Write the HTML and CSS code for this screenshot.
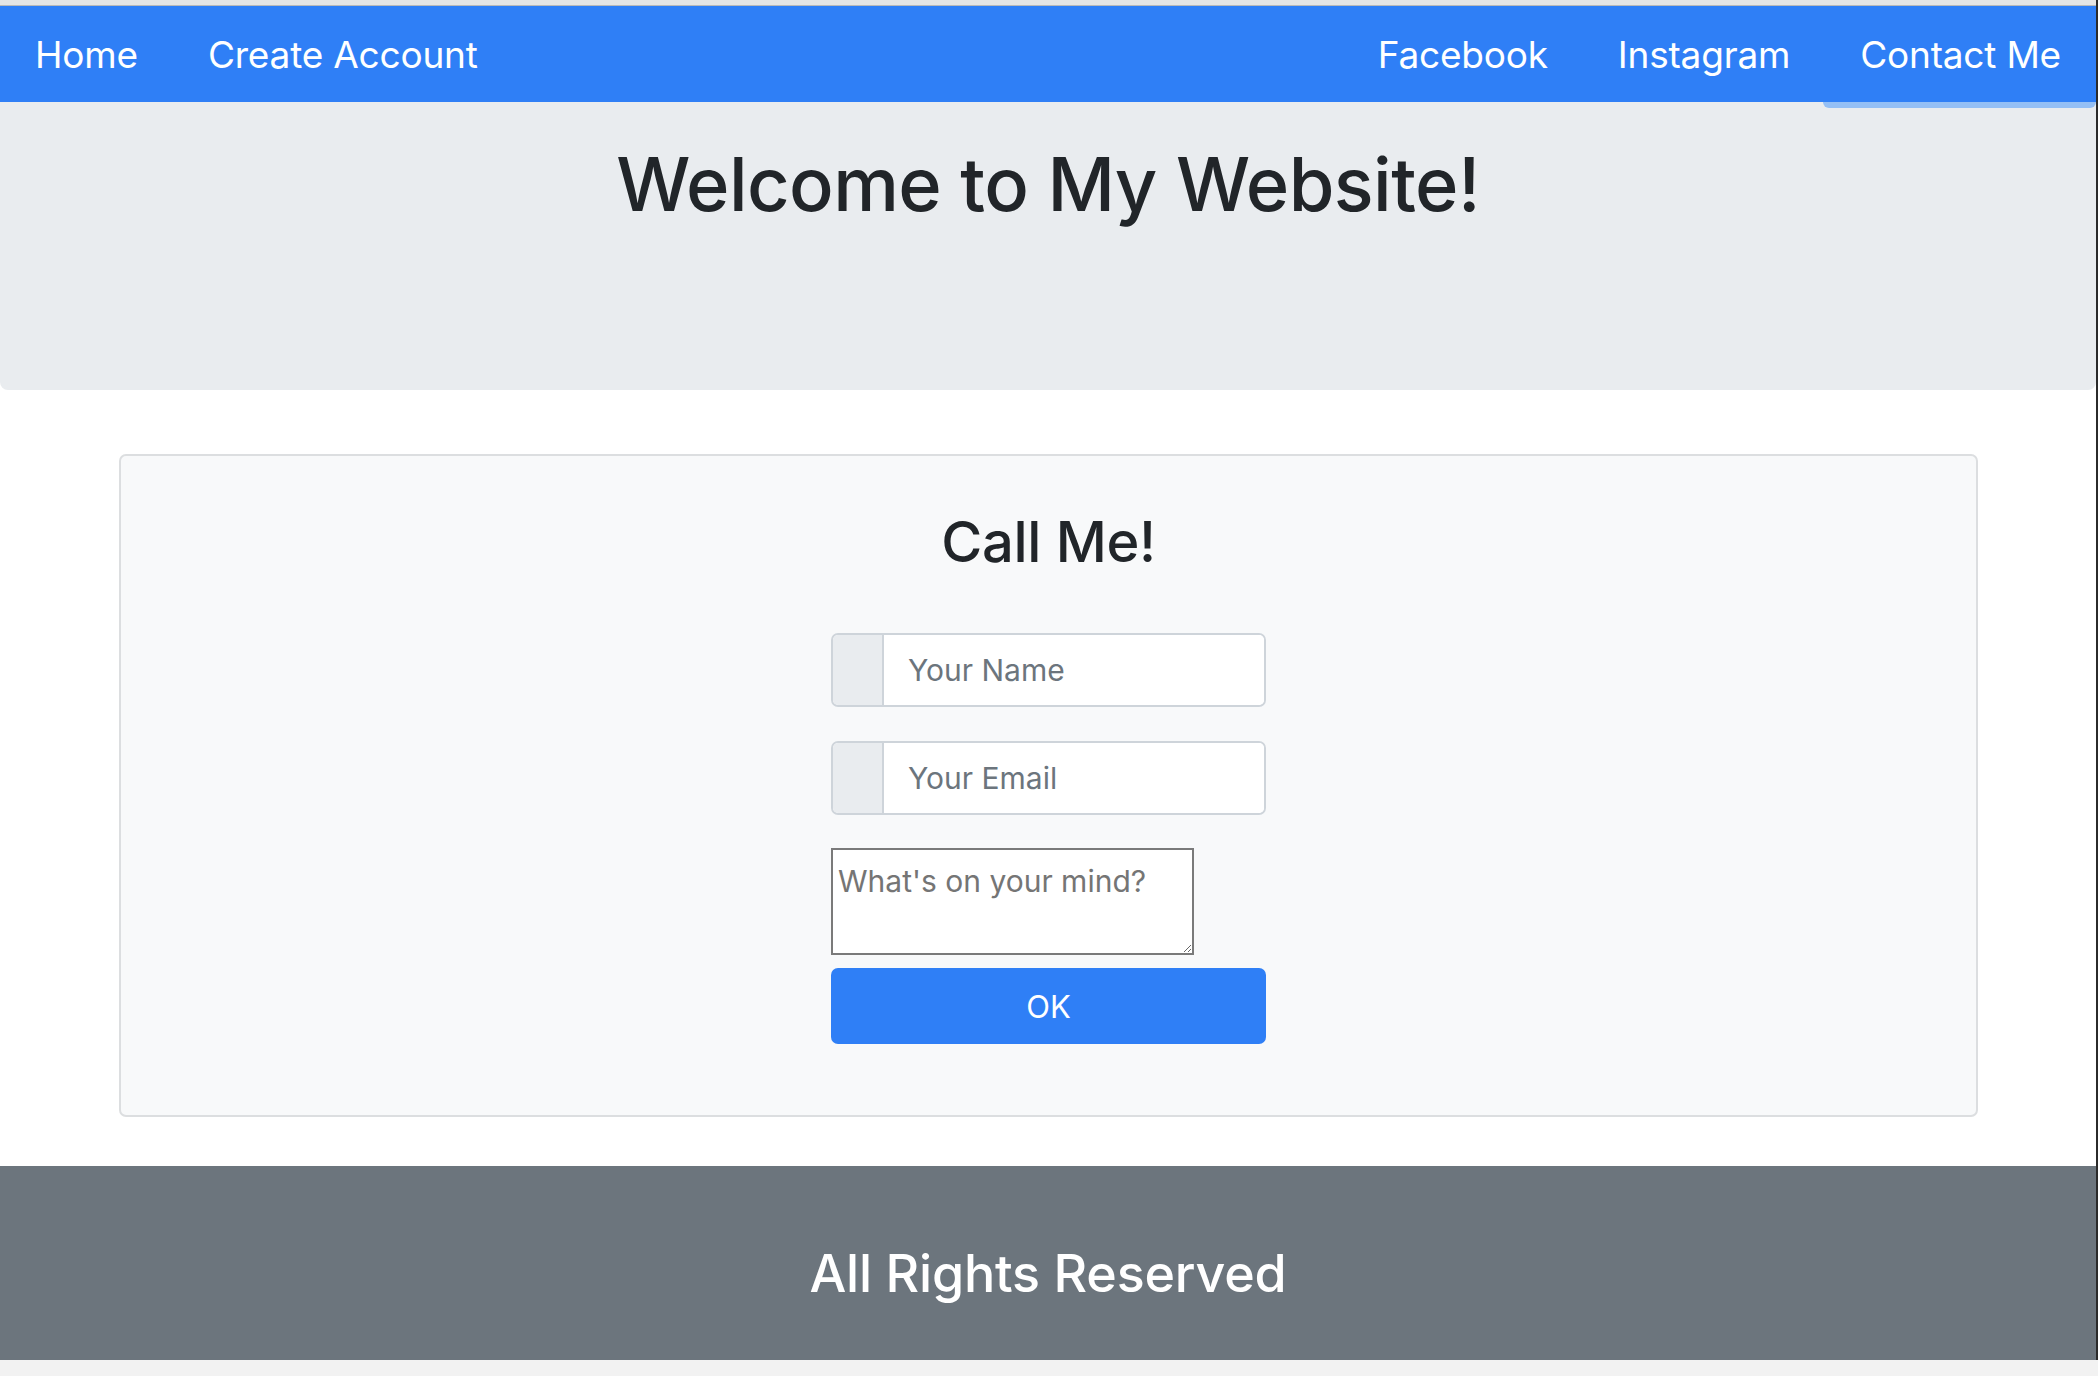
FILE: index.html
```html
<!DOCTYPE html>
<html lang="en">
<head>
<meta charset="utf-8">
<title>My Website</title>
<link rel="stylesheet" href="styles.css">
</head>
<body>
<div class="window">
  <div class="topstrip"></div>
  <nav class="navbar">
    <div class="nav-left">
      <a class="nav-link" href="#">Home</a>
      <a class="nav-link" href="#">Create Account</a>
    </div>
    <div class="nav-right">
      <a class="nav-link" href="#">Facebook</a>
      <a class="nav-link" href="#">Instagram</a>
      <a class="nav-link active" href="#">Contact Me</a>
    </div>
  </nav>
  <header class="hero">
    <h1 class="hero-title">Welcome to My Website!</h1>
  </header>
  <main class="main">
    <section class="card">
      <h2 class="card-title">Call Me!</h2>
      <form class="form">
        <div class="input-group">
          <span class="prepend"></span>
          <input class="field" type="text" placeholder="Your Name">
        </div>
        <div class="input-group">
          <span class="prepend"></span>
          <input class="field" type="email" placeholder="Your Email">
        </div>
        <textarea class="message" placeholder="What's on your mind?"></textarea>
        <button class="btn" type="button">OK</button>
      </form>
    </section>
  </main>
  <footer class="footer">
    <h3 class="footer-text">All Rights Reserved</h3>
  </footer>
</div>
<div class="bottomstrip"></div>
</body>
</html>
```

FILE: styles.css
```css
* { box-sizing: border-box; }
html, body { margin: 0; padding: 0; }
body {
  background: #f2f2f2;
  font-family: "Inter", "Liberation Sans", sans-serif;
  color: #212529;
  width: 2098px;
  overflow: hidden;
}
.window {
  width: 2098px;
  background: #fff;
  border-right: 2px solid #2b2b2b;
}
.topstrip {
  height: 6px;
  background: #e5e5e5;
  border-bottom: 1px solid #b9b9b9;
}
.navbar {
  height: 96px;
  background: #2f7ff6;
  display: flex;
  align-items: stretch;
  justify-content: space-between;
}
.nav-left, .nav-right { display: flex; align-items: stretch; }
.nav-link {
  display: flex;
  align-items: center;
  padding: 0 35px;
  color: #fff;
  text-decoration: none;
  font-size: 37px;
  letter-spacing: -0.2px;
}
.nav-link.active {
  position: relative;
  border-radius: 6px 6px 0 0;
}
.nav-link.active::after {
  content: "";
  position: absolute;
  left: -2px;
  right: 0;
  bottom: -6px;
  height: 6px;
  background: #94bff5;
  border-radius: 0 0 6px 6px;
}
.hero {
  height: 288px;
  background: #e9ecef;
  border-radius: 0 0 8px 8px;
  text-align: center;
  padding-top: 45px;
}
.hero-title {
  margin: 0;
  font-size: 74px;
  font-weight: 500;
  line-height: 1;
  letter-spacing: -0.6px;
}
.main {
  padding: 64px 118px 49px 119px;
}
.card {
  height: 663px;
  background: #f8f9fa;
  border: 2px solid #dcdee0;
  border-radius: 7px;
  padding-top: 58px;
  text-align: center;
}
.card-title {
  margin: 0 0 63px;
  font-size: 56px;
  font-weight: 500;
  line-height: 1;
  letter-spacing: -0.3px;
}
.form {
  width: 435px;
  margin: 0 auto;
  display: flex;
  flex-direction: column;
  align-items: flex-start;
  text-align: left;
}
.input-group {
  width: 435px;
  height: 74px;
  display: flex;
  border: 2px solid #ced4da;
  border-radius: 7px;
  background: #fff;
  overflow: hidden;
  margin-bottom: 34px;
}
.input-group + .input-group { margin-bottom: 33px; }
.prepend {
  flex: 0 0 51px;
  width: 51px;
  background: #e9ecef;
  border-right: 2px solid #ced4da;
}
.field {
  flex: 1 1 auto;
  min-width: 0;
  width: 100%;
  border: 0;
  outline: 0;
  background: #fff;
  padding: 0 0 0 24px;
  font-family: inherit;
  font-size: 30px;
  color: #495057;
}
.field::placeholder { color: #6c757d; }
.message {
  width: 363px;
  height: 107px;
  border: 2px solid #7a7a7a;
  border-radius: 0;
  padding: 13px 5px 2px;
  margin: 0;
  font-family: inherit;
  font-size: 30px;
  background: #fff;
  display: block;
}
.message::placeholder { color: #757575; }
.btn {
  width: 435px;
  height: 76px;
  margin-top: 13px;
  background: #2f7ff6;
  color: #fff;
  border: 0;
  border-radius: 7px;
  font-family: inherit;
  font-size: 31px;
}
.footer {
  height: 194px;
  background: #6c757d;
  text-align: center;
  padding-top: 82px;
}
.footer-text {
  margin: 0;
  color: #fff;
  font-size: 52px;
  font-weight: 500;
  line-height: 1;
  letter-spacing: -0.2px;
}
.bottomstrip {
  height: 16px;
  background: #f2f2f2;
}
```
